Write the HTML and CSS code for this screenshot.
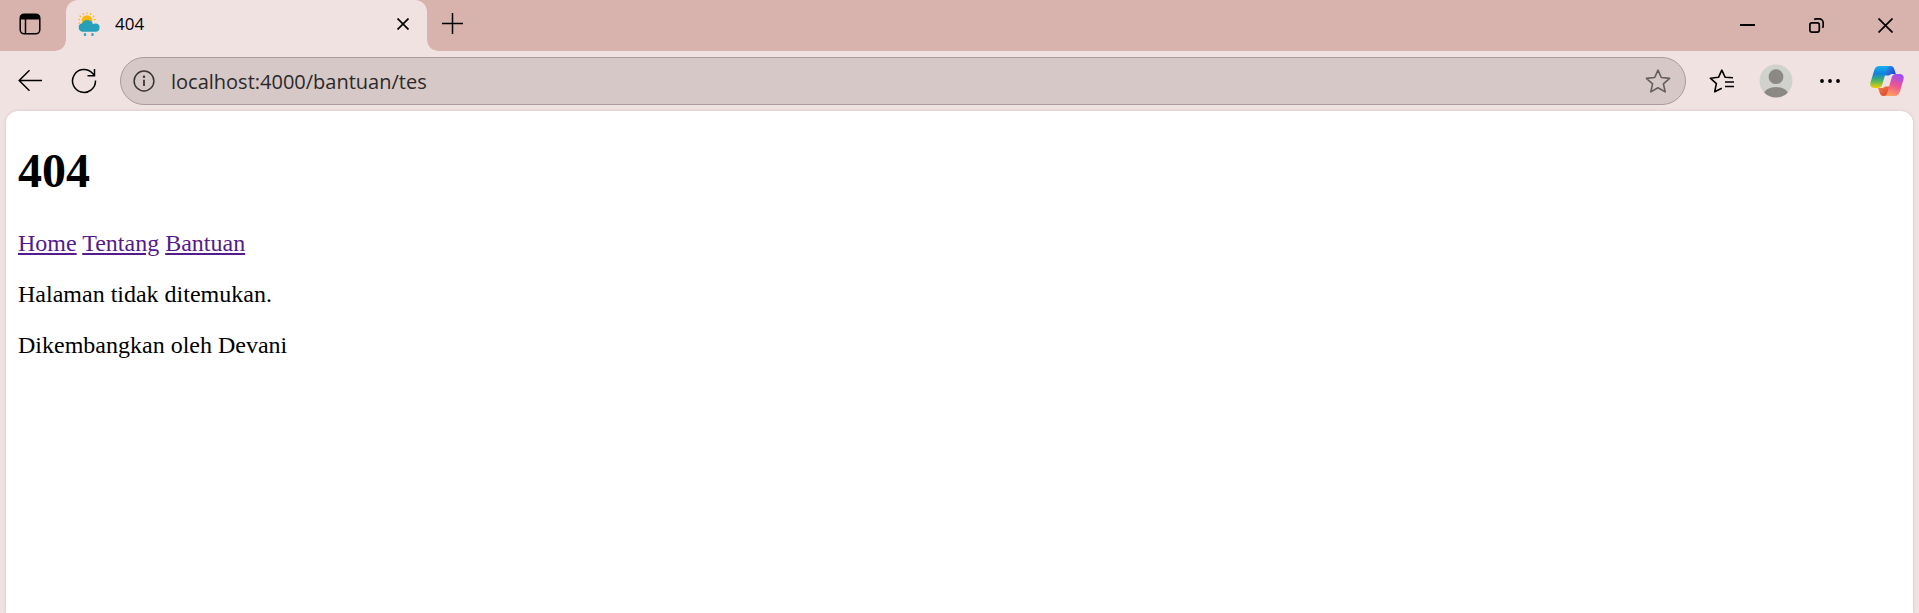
FILE: index.html
```html
<!DOCTYPE html>
<html lang="id">
<head>
<meta charset="utf-8">
<title>404</title>
<link rel="stylesheet" href="styles.css">
</head>
<body>
<div class="browser">
  <header class="tab-strip">
    <button class="tab-actions" aria-label="Tab actions">
      <svg width="22" height="22" viewBox="0 0 22 22"><rect x="1.2" y="1.2" width="19.6" height="19.6" rx="4" fill="none" stroke="#000" stroke-width="1.5"/><path d="M1 6.500V5a4 4 0 0 1 4-4h12a4 4 0 0 1 4 4v1.500z"/><path d="M6.500 6v14.500" stroke="#000" stroke-width="1.500"/></svg>
    </button>
    <div class="tab">
      <svg class="favicon" width="22" height="25" viewBox="0 0 22 25">
        <g stroke="#fbb714" stroke-width="1.200" stroke-linecap="round"><path d="M9 .8v.8M5.200 1.600l.4.8M12.800 1.600l-.4.8M2 4l.7.600M16 4l-.7.600M.7 7.500l.9.2M17.300 7.500l-.9.200M1 11.300l.8-.3"/></g>
        <circle cx="9" cy="8.600" r="5.400" fill="#fdb80a"/>
        <path d="M4.800 19.800a4.300 4.300 0 0 1-.7-8.500 5.800 5.800 0 0 1 10.900 1 4 4 0 0 1 2.400-.7 4.100 4.100 0 0 1 .2 8.200z" fill="#26a0b8"/>
        <path d="M7 22.300v.6M14.500 22.300v.6" stroke="#32a9c0" stroke-width="2.400" stroke-linecap="round"/>
      </svg>
      <span class="tab-title">404</span>
      <button class="tab-close" aria-label="Close tab">
        <svg width="12" height="12" viewBox="0 0 12 12"><path d="M.5.5l11 11M11.500.5l-11 11" stroke="#000" stroke-width="1.700"/></svg>
      </button>
    </div>
    <button class="new-tab" aria-label="New tab">
      <svg width="21" height="21" viewBox="0 0 21 21"><path d="M0 10.500h21M10.500 0v21" stroke="#000" stroke-width="1.500"/></svg>
    </button>
    <div class="window-controls">
      <button class="window-button" aria-label="Minimize"><svg width="15" height="15" viewBox="0 0 15 15"><path d="M0 7h15" stroke="#000" stroke-width="2"/></svg></button>
      <button class="window-button" aria-label="Restore"><svg width="15" height="15" viewBox="0 0 15 15" fill="none" stroke="#000" stroke-width="1.700"><rect x=".9" y="4.900" width="9.400" height="9.200" rx="2"/><path d="M5.200 1.500Q6 .9 7.200.9h3a4 4 0 0 1 4 4v2.800q0 1.200-.7 2"/></svg></button>
      <button class="window-button" aria-label="Close"><svg width="15" height="15" viewBox="0 0 15 15"><path d="M.5.5l14 14M14.500.5l-14 14" stroke="#000" stroke-width="1.700"/></svg></button>
    </div>
  </header>

  <div class="toolbar">
    <button class="tool" aria-label="Back"><svg width="24" height="22" viewBox="0 0 24 22" fill="none" stroke="#000" stroke-width="1.500"><path d="M24 10.500H1M11.500.3L1.200 10.500l10.300 10.300"/></svg></button>
    <button class="tool" aria-label="Refresh"><svg width="26" height="26" viewBox="0 0 26 26" fill="none" stroke="#000" stroke-width="1.500"><path d="M24.500 12.500A11.500 11.500 0 1 1 21.500 5.200L23.600 7.500M23.500 1v6.700h-7"/></svg></button>
    <div class="address">
      <button class="address-icon" aria-label="Site information"><svg width="22" height="22" viewBox="0 0 22 22" fill="none" stroke="#393535"><circle cx="11" cy="11" r="9.900" stroke-width="1.500"/><path d="M11 9.800V16" stroke-width="1.800"/><circle cx="11" cy="6.800" r="1.200" fill="#393535" stroke="none"/></svg></button>
      <input class="address-input" type="text" aria-label="Address" value="localhost:4000/bantuan/tes" spellcheck="false">
      <button class="address-icon" aria-label="Add to favorites"><svg width="26" height="24" viewBox="0 0 26 24"><path d="M13 1.200l3.300 7.300 8.300.9-6.200 5.500 1.800 8-7.200-4.100-7.200 4.100 1.800-8L1.400 9.400l8.300-.9z" fill="none" stroke="#645e5e" stroke-width="1.600" stroke-linejoin="round"/></svg></button>
    </div>
    <button class="tool" aria-label="Favorites"><svg width="26" height="24" viewBox="0 0 26 24" fill="none" stroke="#000" stroke-width="1.600" stroke-linejoin="round"><path d="M24 8.700l-7.800-.4L12.800 1.200 9.500 8.300l-8.200.9 6.100 5.500-1.700 8 7.100-3.400"/><path d="M16 13h9M16 17.500h9"/></svg></button>
    <button class="tool" aria-label="Profile"><svg width="34" height="34" viewBox="0 0 34 34"><defs><clipPath id="disc"><circle cx="17" cy="17" r="16.500"/></clipPath></defs><circle cx="17" cy="17" r="16.500" fill="#d1d2ce"/><g clip-path="url(#disc)" fill="#8c8985"><circle cx="17" cy="12.700" r="7.400"/><path d="M4 30.500a13.300 9.500 0 0 1 26 0V34H4z"/></g></svg></button>
    <button class="tool" aria-label="Settings and more"><svg width="20" height="4" viewBox="0 0 20 4"><circle cx="2" cy="2" r="1.900"/><circle cx="10" cy="2" r="1.900"/><circle cx="18" cy="2" r="1.900"/></svg></button>
    <button class="tool tool-wide" aria-label="Copilot">
      <svg width="34" height="30" viewBox="0 0 34 30">
        <defs>
          <linearGradient id="left" x1="0" y1="0" x2="0" y2="1"><stop offset="0" stop-color="#1aafef"/><stop offset=".35" stop-color="#0d84dd"/><stop offset=".65" stop-color="#45b463"/><stop offset="1" stop-color="#f4cd04"/></linearGradient>
          <linearGradient id="top" x1="0" y1="0" x2="1" y2=".6"><stop offset="0" stop-color="#22a6ef"/><stop offset="1" stop-color="#2448cd"/></linearGradient>
          <linearGradient id="right" x1=".6" y1="0" x2=".3" y2="1"><stop offset="0" stop-color="#a24df2"/><stop offset=".5" stop-color="#ee5590"/><stop offset="1" stop-color="#ffa35b"/></linearGradient>
          <linearGradient id="bottom" x1="0" y1="0" x2="1" y2="1"><stop offset="0" stop-color="#f3803b"/><stop offset="1" stop-color="#db3c35"/></linearGradient>
        </defs>
        <path d="M15 0h5.500c2.200 0 3.100 1.100 3.700 3l1.700 5H23c-2 0-3 .5-4 1.500h-5z" fill="url(#top)"/>
        <path d="M19 30h-5.500c-2.200 0-3.100-1.100-3.700-3l-1.700-5H11c2 0 3-.5 4-1.500h5z" fill="url(#bottom)"/>
        <path d="M9.500 0H20c-2.400.4-2.900 2-3.500 4l-4.200 14.500C11.600 20.700 10.500 22 8 22H4.500C1 22-.3 19.600.5 16.500L4.200 4.200C5 1.500 6.700 0 9.500 0z" fill="url(#left)"/>
        <path d="M24.500 30H14c2.400-.4 2.900-2 3.500-4l4.200-14.500C22.400 9.300 23.500 8 26 8h3.500c3.500 0 4.800 2.400 4 5.500l-3.700 12.300c-.8 2.700-2.500 4.200-5.300 4.200z" fill="url(#right)"/>
      </svg>
    </button>
  </div>

  <main class="page">
    <h1>404</h1>
    <nav><a href="#home">Home</a> <a href="#tentang">Tentang</a> <a href="#bantuan">Bantuan</a></nav>
    <p>Halaman tidak ditemukan.</p>
    <p>Dikembangkan oleh Devani</p>
  </main>
</div>
</body>
</html>
```

FILE: styles.css
```css
* {
  box-sizing: border-box;
}

body {
  margin: 0;
  background: #f0e2e1;
}

button {
  display: flex;
  align-items: center;
  justify-content: center;
  padding: 0;
  border: 0;
  background: transparent;
}

.browser {
  display: flex;
  flex-direction: column;
  min-height: 100vh;
  font-family: "Open Sans", "Noto Sans", sans-serif;
}

.tab-strip {
  display: flex;
  height: 51px;
  background: #d8b2ac;
}

.tab-actions {
  width: 60px;
  margin-right: 6px;
  padding-bottom: 3px;
}

.tab {
  position: relative;
  display: flex;
  align-items: center;
  width: 361px;
  padding: 0 15px 3px 12px;
  border-radius: 12px 12px 0 0;
  background: #f0e2e1;
}

/* Flared corners where the tab meets the toolbar */
.tab::before,
.tab::after {
  content: "";
  position: absolute;
  bottom: 0;
  width: 10px;
  height: 10px;
}

.tab::before {
  right: 100%;
  background: radial-gradient(circle at 0 0, #d8b2ac 9px, #f0e2e1 10px);
}

.tab::after {
  left: 100%;
  background: radial-gradient(circle at 100% 0, #d8b2ac 9px, #f0e2e1 10px);
}

.tab-title {
  flex: 1;
  margin-left: 15px;
  font-size: 17px;
  line-height: 24px;
}

.tab-close {
  width: 18px;
  height: 24px;
}

.new-tab {
  width: 51px;
  padding-bottom: 4px;
}

.window-controls {
  display: flex;
  margin-left: auto;
}

.window-button {
  width: 69px;
  padding-left: 2px;
}

.toolbar {
  display: flex;
  align-items: center;
  height: 60px;
  padding: 0 2px 0 3px;
}

.tool {
  width: 54px;
  height: 48px;
}

.tool-wide {
  width: 60px;
}

.address {
  display: flex;
  flex: 1;
  align-items: center;
  height: 48px;
  margin: 0 9px;
  padding: 0 14px 0 12px;
  border: 1px solid #aa9c9c;
  border-radius: 24px;
  background: #d6c8c7;
}

.address-icon {
  height: 30px;
}

.address-input {
  flex: 1;
  min-width: 0;
  margin-left: 16px;
  padding: 2px 0 0;
  border: 0;
  outline: 0;
  background: transparent;
  color: #2c2929;
  font-family: inherit;
  font-size: 20px;
  line-height: 30px;
}

.page {
  flex: 1;
  margin: 0 6px;
  padding: 0 12px;
  border-radius: 12px 12px 0 0;
  background: #fff;
  box-shadow: 0 0 3px #cfbfbf;
  color: #000;
  font-family: "Liberation Serif", "Times New Roman", serif;
  font-size: 24px;
}

.page h1 {
  margin: 32px 0;
  font-size: 48px;
}

.page p {
  margin: 24px 0;
}

.page a {
  color: #551a8b;
}
```
